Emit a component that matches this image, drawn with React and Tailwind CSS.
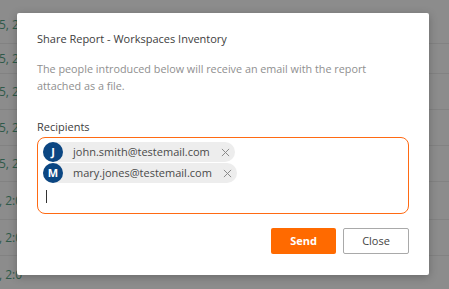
import React from 'react';

const rows = [
  { y: 'h-[38px]', text: '5, 2' },
  { y: 'h-[30px]', text: '5, 2' },
  { y: 'h-[36px]', text: '5, 2' },
  { y: 'h-[36px]', text: '5, 2' },
  { y: 'h-[36px]', text: '5, 2' },
  { y: 'h-[38px]', text: ', 2:0' },
  { y: 'h-[36px]', text: ', 2:0' },
  { y: 'h-[39px]', text: ', 2:0' },
];

const recipients = [
  { initial: 'J', email: 'john.smith@testemail.com' },
  { initial: 'M', email: 'mary.jones@testemail.com' },
];

const Chip = ({ initial, email }) => (
  <div className="flex items-center h-[20px] rounded-full bg-[#ededed] pr-[5px] w-fit">
    <div className="w-[20px] h-[20px] rounded-full bg-[#0b4682] text-white text-[11px] font-bold flex items-center justify-center">
      {initial}
    </div>
    <span className="ml-[10px] text-[11px] text-[#4a4a4a]">{email}</span>
    <svg className="ml-[11px]" width="9" height="9" viewBox="0 0 10 10" fill="none" stroke="#8a8a8a" strokeWidth="1.1">
      <path d="M1 1 L9 9 M9 1 L1 9" />
    </svg>
  </div>
);

export default function App() {
  return (
    <div className="relative w-[449px] h-[289px] overflow-hidden bg-[#8c8c8c]" style={{ fontFamily: '"Open Sans", sans-serif' }}>
      {/* background table seen through overlay */}
      <div className="flex flex-col pt-[6px]">
        {rows.map((r, i) => (
          <div key={i} className={`${r.y} border-b border-[#828282] flex items-center`}>
            <span className="text-[12px] text-[#2f5a4a] -ml-[1px]">{r.text}</span>
          </div>
        ))}
      </div>

      <div className="absolute left-[17px] top-[13px] w-[412px] h-[262px] bg-white rounded-[2px] shadow-[0_2px_8px_rgba(0,0,0,0.25)] px-[20px] pt-[17px]">
        <h3 className="text-[11px] leading-[18px] text-[#3d3d3d]">Share Report - Workspaces Inventory</h3>
        <p className="mt-[12px] text-[10.8px] leading-[17px] text-[#8f8f8f]">
          The people introduced below will receive an email with the report
          <br />
          attached as a file.
        </p>
        <label className="block mt-[25px] text-[11px] leading-[16px] text-[#3d3d3d]">Recipients</label>
        <div className="mt-[2px] h-[77px] border-[1.5px] border-[#ff6a13] rounded-[8px] px-[5px] pt-[4px] flex flex-col gap-[1px]">
          {recipients.map((r) => (
            <Chip key={r.email} {...r} />
          ))}
          <div className="mt-[6px] ml-[3px] w-[1px] h-[13px] bg-[#333]" />
        </div>
        <div className="flex justify-end gap-[7px] mt-[14px]">
          <button className="w-[65px] h-[26px] rounded-[2px] bg-[#ff6a00] text-white text-[11px] font-bold">Send</button>
          <button className="w-[66px] h-[26px] rounded-[2px] bg-white border border-[#a9a9a9] text-[#444] text-[11px]">Close</button>
        </div>
      </div>
    </div>
  );
}
